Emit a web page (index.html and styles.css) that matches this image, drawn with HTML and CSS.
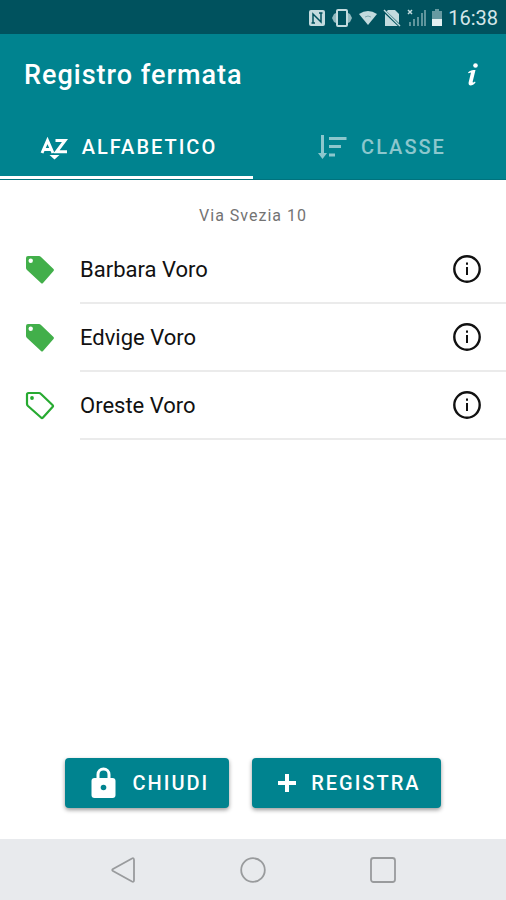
FILE: index.html
```html
<!DOCTYPE html>
<html lang="it">
<head>
<meta charset="utf-8">
<meta name="viewport" content="width=device-width, initial-scale=1">
<title>Registro fermata</title>
<link rel="stylesheet" href="styles.css">
</head>
<body>
<div class="status">
  <svg width="18" height="18" viewBox="0 0 18 18" aria-hidden="true"><rect x="1" y="1" width="16" height="16" rx="2" fill="#c3dbde"/><path d="M5 14V5l8 8V4M3.500 14H7M11 4h3.500" fill="none" stroke="#00525e" stroke-width="1.500"/></svg>
  <svg width="22" height="18" viewBox="0 0 22 18" aria-hidden="true"><path d="M7 0h8v3l4 2 2 4-2 4-4 2v3H7v-3l-4-2-2-4 2-4 4-2z" fill="#90b9be"/><rect x="6" y="1" width="10" height="16" rx="1" fill="#00525e" stroke="#c3dbde" stroke-width="2"/></svg>
  <svg width="20" height="18" viewBox="0 0 20 18" aria-hidden="true"><path d="M1 5Q10-1 19 5L10 16z" fill="#c3dbde"/><path d="M7 8q3-2 6 0" fill="none" stroke="#7faab0"/></svg>
  <svg width="18" height="18" viewBox="0 0 18 18" aria-hidden="true"><path d="M5 1h7l4 4v12H2V4z" fill="#c3dbde"/><path d="M0 1l17 16" stroke="#00525e" stroke-width="3"/><path d="M1 1l16 16" stroke="#c3dbde" stroke-width="1.500"/></svg>
  <svg width="20" height="18" viewBox="0 0 20 18" aria-hidden="true"><path d="M2 1l4 4M6 1L2 5" stroke="#c3dbde" stroke-width="1.500"/><path d="M4 17v-4M8 17v-7M12 17V8M16 17V4M19 17V1" stroke="#5f959c" stroke-width="2"/></svg>
  <svg class="battery" width="12" height="18" viewBox="0 0 12 18" aria-hidden="true"><path d="M4 0h4v2h3v8H1V2h3z" fill="#679aa1"/><path d="M1 10h10v7H1z" fill="#e4f0f1"/></svg>
  <span class="clock">16:38</span>
</div>
<header class="header">
  <div class="toolbar">
    <h1 class="title">Registro fermata</h1>
    <button class="icon-button" type="button" aria-label="Informazioni">
      <svg width="14" height="26" viewBox="0 0 14 26"><circle cx="9.500" cy="3.500" r="2.300" fill="#fff"/><path d="M2 10.500C4 8.500 6 8 9.500 8L6.700 19.500C6.400 21 7.500 20.500 9 19.500L9.500 20.500C7 24 2 25 2.600 20.500L5 10.500L2.500 11.300z" fill="#fff"/></svg>
    </button>
  </div>
  <nav class="tabs">
    <a class="tab tab-active" href="#alfabetico" aria-current="page">
      <svg width="28" height="26" viewBox="0 0 28 26" aria-hidden="true"><path d="M2 19L7.500 6.500L13 19M4 15.500h7M15.500 6.500H25L16.500 17.800H27" fill="none" stroke="#fff" stroke-width="3"/><path d="M9.500 21h10L14.500 25.500z" fill="#fff"/></svg>
      <span>ALFABETICO</span>
    </a>
    <a class="tab" href="#classe">
      <svg width="30" height="26" viewBox="0 0 30 26" aria-hidden="true"><path d="M5.500 1v19M12 4.500h17.500M12 12.500h12M12 21h6" fill="none" stroke="currentColor" stroke-width="3"/><path d="M1 19h9l-4.500 6z" fill="currentColor"/></svg>
      <span>CLASSE</span>
    </a>
  </nav>
</header>
<main class="content">
  <h2 class="stop">Via Svezia 10</h2>
  <ul class="list">
    <li class="item">
      <svg class="tag" viewBox="0 0 30 30" aria-hidden="true"><path d="M3 1h11q1 0 2 1l12.500 12q1 1 0 2L18 28q-1 1-2 0L2 15q-1-1-1-2V3q0-2 2-2z" fill="#42af4a"/><circle cx="5.700" cy="5.700" r="2.200" fill="#fff"/></svg>
      <div class="row"><span>Barbara Voro</span>
        <button class="info" type="button" aria-label="Dettagli Barbara Voro"><svg width="30" height="30" viewBox="0 0 30 30"><circle cx="15" cy="15" r="12.700" fill="none" stroke="#111" stroke-width="2.400"/><path d="M15 13v8M15 8.500v2.200" stroke="#111" stroke-width="2"/></svg></button></div>
    </li>
    <li class="item">
      <svg class="tag" viewBox="0 0 30 30" aria-hidden="true"><path d="M3 1h11q1 0 2 1l12.500 12q1 1 0 2L18 28q-1 1-2 0L2 15q-1-1-1-2V3q0-2 2-2z" fill="#42af4a"/><circle cx="5.700" cy="5.700" r="2.200" fill="#fff"/></svg>
      <div class="row"><span>Edvige Voro</span>
        <button class="info" type="button" aria-label="Dettagli Edvige Voro"><svg width="30" height="30" viewBox="0 0 30 30"><circle cx="15" cy="15" r="12.700" fill="none" stroke="#111" stroke-width="2.400"/><path d="M15 13v8M15 8.500v2.200" stroke="#111" stroke-width="2"/></svg></button></div>
    </li>
    <li class="item">
      <svg class="tag" viewBox="0 0 30 30" aria-hidden="true"><path d="M3.500 2H14q1 0 2 1l11.500 11q1 1 0 2L18 26.500q-1 1-2 0L3 15q-1-1-1-2V3.500Q2 2 3.500 2z" fill="none" stroke="#27aa31" stroke-width="2.200" stroke-linejoin="round"/><circle cx="7" cy="7" r="1.900" fill="#27aa31"/></svg>
      <div class="row"><span>Oreste Voro</span>
        <button class="info" type="button" aria-label="Dettagli Oreste Voro"><svg width="30" height="30" viewBox="0 0 30 30"><circle cx="15" cy="15" r="12.700" fill="none" stroke="#111" stroke-width="2.400"/><path d="M15 13v8M15 8.500v2.200" stroke="#111" stroke-width="2"/></svg></button></div>
    </li>
  </ul>
</main>
<footer class="actions">
  <button class="action" type="button">
    <svg width="28" height="32" viewBox="0 0 28 32" aria-hidden="true"><path d="M8 13V7.500a5.500 5.500 0 0 1 11 0V13" fill="none" stroke="#fff" stroke-width="3"/><rect x="1.500" y="11" width="24" height="20" rx="3" fill="#fff"/><circle cx="13.500" cy="20.500" r="2.800" fill="#00838f"/></svg>
    <span>CHIUDI</span>
  </button>
  <button class="action" type="button">
    <svg width="20" height="20" viewBox="0 0 20 20" aria-hidden="true"><path d="M10 1v18M1 10h18" stroke="#fff" stroke-width="4"/></svg>
    <span>REGISTRA</span>
  </button>
</footer>
<nav class="system" aria-label="Sistema">
  <button class="key" type="button" aria-label="Indietro"><svg width="26" height="28" viewBox="0 0 26 28"><path d="M22 2.500Q24 1.500 24 4v20q0 2.500-2 1.500L3 15q-1.500-1 0-2z" fill="none" stroke="#999b9d" stroke-width="1.800"/></svg></button>
  <button class="key" type="button" aria-label="Home"><svg width="26" height="28" viewBox="0 0 26 28"><circle cx="13" cy="14" r="11.800" fill="none" stroke="#999b9d" stroke-width="1.800"/></svg></button>
  <button class="key" type="button" aria-label="Recenti"><svg width="26" height="28" viewBox="0 0 26 28"><rect x="1" y="2" width="24" height="24" rx="2.500" fill="none" stroke="#999b9d" stroke-width="1.800"/></svg></button>
</nav>
</body>
</html>
```
FILE: styles.css
```css
* {
  box-sizing: border-box;
}

body {
  margin: 0;
  min-height: 100vh;
  display: flex;
  flex-direction: column;
  background: #fff;
  color: #111;
  font-family: Roboto, sans-serif;
}

button {
  border: 0;
  padding: 0;
  background: none;
  color: inherit;
  font: inherit;
}

svg {
  display: block;
  flex: none;
}

.status {
  display: flex;
  align-items: center;
  justify-content: flex-end;
  gap: 5px;
  height: 34px;
  padding: 2px 8px 0;
  background: #00525e;
  color: #d5e6e8;
}

.clock {
  font-size: 20px;
  line-height: 24px;
}

.header {
  background: #00838f;
  color: #fff;
  border-bottom: 1px solid #00727d;
}

.toolbar {
  display: flex;
  align-items: center;
  justify-content: space-between;
  height: 82px;
  padding: 0 24px;
}

.title {
  margin: 0;
  font-size: 27px;
  line-height: 36px;
  font-weight: 500;
  letter-spacing: 1px;
}

.icon-button {
  padding: 0 2px;
}

.tabs {
  display: grid;
  grid-template-columns: 1fr 1fr;
  height: 63px;
}

.tab {
  display: flex;
  align-items: center;
  justify-content: center;
  gap: 14px;
  padding: 2px 0 0 4px;
  border-bottom: 3px solid transparent;
  color: #8cc7cd;
  font-size: 20px;
  font-weight: 500;
  letter-spacing: 2px;
  text-decoration: none;
}

.tab-active {
  border-bottom-color: #fff;
  color: #fff;
}

.content {
  flex: 1;
}

.stop {
  margin: 0;
  padding: 24px 24px 8px;
  color: #737373;
  font-size: 16px;
  line-height: 24px;
  font-weight: 400;
  letter-spacing: 1px;
  text-align: center;
}

.list {
  margin: 0;
  padding: 0;
  list-style: none;
}

.item {
  display: flex;
  align-items: center;
  gap: 25px;
  padding-left: 25px;
}

.tag {
  width: 30px;
  height: 30px;
}

.row {
  flex: 1;
  display: flex;
  align-items: center;
  justify-content: space-between;
  height: 68px;
  padding-right: 24px;
  border-bottom: 2px solid #ebebeb;
  font-size: 22px;
}

.actions {
  display: flex;
  justify-content: center;
  gap: 23px;
  padding: 0 0 31px;
}

.action {
  display: flex;
  align-items: center;
  gap: 14px;
  height: 50px;
  padding: 0 20px 0 25px;
  border-radius: 4px;
  background: #00838f;
  box-shadow: 0 2px 4px rgba(0, 0, 0, 0.4);
  color: #fff;
  font-size: 20px;
  font-weight: 500;
  letter-spacing: 2px;
}

.system {
  display: flex;
  align-items: center;
  justify-content: center;
  gap: 104px;
  height: 61px;
  background: #e8eaed;
}
```
